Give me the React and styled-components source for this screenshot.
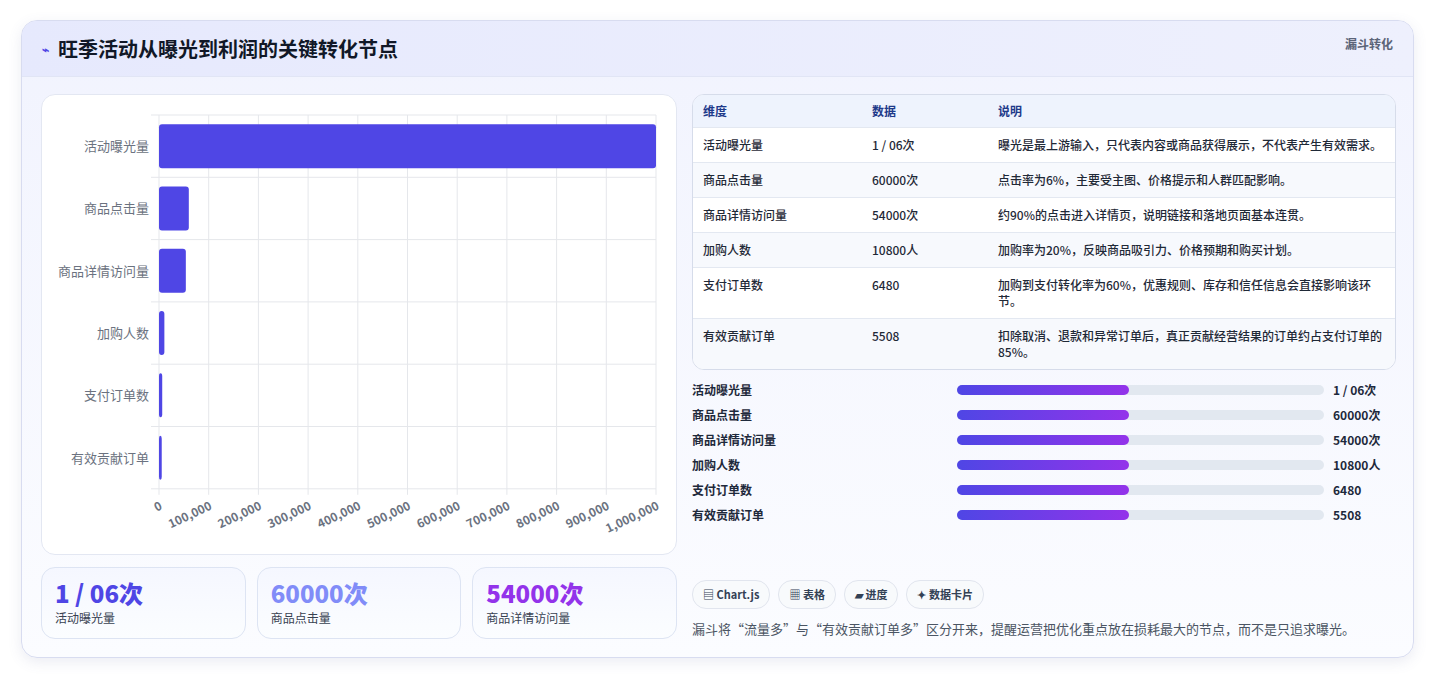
import React from "react";
import styled, { createGlobalStyle } from "styled-components";

const GlobalStyle = createGlobalStyle`
  body {
    margin: 0;
    background: #f3f4f8;
    font-family: "Noto Sans CJK SC", "Noto Sans", sans-serif;
    color: #1e293b;
  }
`;

const Page = styled.div`
  padding: 20px 21px 21px 21px;
  height: 679px;
  box-sizing: border-box;
  background: #ffffff;
`;

const Card = styled.div`
  border: 1px solid #d8dcf0;
  border-radius: 16px;
  background: linear-gradient(180deg, #f1f3fe 0%, #fbfcff 100%);
  box-shadow: 0 4px 14px rgba(90, 100, 160, 0.12);
  overflow: hidden;
  height: 638px;
  box-sizing: border-box;
`;

const Header = styled.div`
  height: 55px;
  display: flex;
  align-items: center;
  justify-content: space-between;
  padding: 0 20px 0 20px;
  background: linear-gradient(90deg, #e6e9fd, #eef0fd);
  border-bottom: 1px solid #e1e5f5;
`;

const Title = styled.h1`
  margin: 0;
  font-size: 20px;
  font-weight: 700;
  color: #111827;
  display: flex;
  align-items: center;
  gap: 9px;
`;

const Tag = styled.span`
  font-size: 12px;
  font-weight: 700;
  color: #5b6478;
  align-self: flex-start;
  margin-top: 14px;
`;

const Body = styled.div`
  display: grid;
  grid-template-columns: 636px 704px;
  gap: 15px;
  padding: 17px 19px 0 19px;
`;

const Col = styled.div`
  display: flex;
  flex-direction: column;
`;

const ChartPanel = styled.div`
  height: 461px;
  background: #fff;
  border: 1px solid #e3e7f2;
  border-radius: 14px;
  box-sizing: border-box;
`;

const Kpis = styled.div`
  display: grid;
  grid-template-columns: repeat(3, 1fr);
  gap: 11px;
  margin-top: 12px;
`;

const Kpi = styled.div`
  height: 72px;
  border: 1px solid #dde4f3;
  border-radius: 14px;
  background: linear-gradient(180deg, #f5f7ff, #fbfdff);
  padding: 9px 13px;
  box-sizing: border-box;
`;

const KpiValue = styled.div`
  font-size: 24px;
  font-weight: 800;
  line-height: 32px;
  color: ${(p) => p.color};
`;

const KpiLabel = styled.div`
  font-size: 12px;
  line-height: 18px;
  color: #374151;
`;

const TableWrap = styled.div`
  border: 1px solid #d6dcea;
  border-radius: 12px;
  overflow: hidden;
  background: #fff;
`;

const Table = styled.table`
  width: 100%;
  border-collapse: collapse;
  font-size: 12px;
  table-layout: fixed;
  td, th {
    padding: 9px 10px;
    text-align: left;
    vertical-align: top;
    line-height: 16px;
    border-bottom: 1px solid #e3e8f1;
  }
  th {
    background: #eef3fd;
    color: #1e3a8a;
    font-weight: 700;
    padding: 8px 10px;
  }
  td { color: #1f2937; font-weight: 500; }
  tbody tr:nth-child(even) td { background: #f7f9fd; }
  tbody tr:last-child td { border-bottom: none; }
`;

const Progress = styled.div`
  margin-top: 10px;
  display: flex;
  flex-direction: column;
  gap: 6px;
`;

const PRow = styled.div`
  display: grid;
  grid-template-columns: 256px 367px 1fr;
  gap: 9px;
  align-items: center;
  font-size: 12px;
  font-weight: 600;
  height: 19px;
  white-space: nowrap;
`;

const Track = styled.div`
  height: 10px;
  border-radius: 5px;
  background: #e2e8f0;
`;

const Fill = styled.div`
  height: 100%;
  border-radius: 5px;
  background: linear-gradient(90deg, #4f46e5, #9333ea);
`;

const Chips = styled.div`
  display: flex;
  gap: 8px;
  margin-top: 56px;
`;

const Chip = styled.span`
  font-size: 11px;
  line-height: 15px;
  font-weight: 700;
  color: #334155;
  padding: 6px 10px;
  border: 1px solid #e1e5ee;
  border-radius: 14px;
  background: #f8fafc;
`;

const Note = styled.p`
  margin: 11px 0 0;
  font-size: 13px;
  line-height: 18px;
  color: #4b5563;
`;

const rows = [
  ["活动曝光量", "1 / 06次", "曝光是最上游输入，只代表内容或商品获得展示，不代表产生有效需求。", 1000000],
  ["商品点击量", "60000次", "点击率为6%，主要受主图、价格提示和人群匹配影响。", 60000],
  ["商品详情访问量", "54000次", "约90%的点击进入详情页，说明链接和落地页面基本连贯。", 54000],
  ["加购人数", "10800人", "加购率为20%，反映商品吸引力、价格预期和购买计划。", 10800],
  ["支付订单数", "6480", "加购到支付转化率为60%，优惠规则、库存和信任信息会直接影响该环节。", 6480],
  ["有效贡献订单", "5508", "扣除取消、退款和异常订单后，真正贡献经营结果的订单约占支付订单的85%。", 5508],
];

function Chart() {
  const x0 = 117, x1 = 614, y0 = 20, rowH = 62.3;
  const sx = (v) => x0 + ((x1 - x0) * v) / 1000000;
  const ticks = Array.from({ length: 11 }, (_, i) => i * 100000);
  return (
    <svg width="636" height="461" style={{ display: "block" }}>
      {ticks.map((t) => (
        <line key={t} x1={sx(t)} x2={sx(t)} y1={y0} y2={y0 + rowH * 6 + 6} stroke="#e5e7eb" />
      ))}
      {Array.from({ length: 7 }, (_, i) => (
        <line key={i} x1={x0 - 8} x2={x1} y1={y0 + rowH * i} y2={y0 + rowH * i} stroke="#e5e7eb" />
      ))}
      {rows.map((r, i) => {
        const cy = y0 + rowH * i + rowH / 2;
        return (
          <g key={r[0]}>
            <text x={x0 - 10} y={cy + 5} textAnchor="end" fontSize="13" fill="#6b7280">{r[0]}</text>
            <rect x={x0} y={cy - 22} width={Math.max(sx(r[3]) - x0, 2)} height={44} rx="3" fill="#4f46e5" />
          </g>
        );
      })}
      {ticks.map((t) => (
        <text key={t} x={sx(t) + 4} y={y0 + rowH * 6 + 20} fontSize="12" fontWeight="700" fill="#6b7280" textAnchor="end"
          transform={`rotate(-25 ${sx(t) + 4} ${y0 + rowH * 6 + 20})`}>
          {t.toLocaleString("en-US")}
        </text>
      ))}
    </svg>
  );
}

export default function App() {
  return (
    <Page>
      <GlobalStyle />
      <Card>
        <Header>
          <Title><span style={{ color: "#4f46e5", fontSize: 12 }}>⌁</span>旺季活动从曝光到利润的关键转化节点</Title>
          <Tag>漏斗转化</Tag>
        </Header>
        <Body>
          <Col>
            <ChartPanel><Chart /></ChartPanel>
            <Kpis>
              <Kpi><KpiValue color="#4f46e5">1 / 06次</KpiValue><KpiLabel>活动曝光量</KpiLabel></Kpi>
              <Kpi><KpiValue color="#818cf8">60000次</KpiValue><KpiLabel>商品点击量</KpiLabel></Kpi>
              <Kpi><KpiValue color="#9333ea">54000次</KpiValue><KpiLabel>商品详情访问量</KpiLabel></Kpi>
            </Kpis>
          </Col>
          <Col>
            <TableWrap>
              <Table>
                <colgroup><col style={{ width: 169 }} /><col style={{ width: 126 }} /><col /></colgroup>
                <thead><tr><th>维度</th><th>数据</th><th>说明</th></tr></thead>
                <tbody>
                  {rows.map((r) => (
                    <tr key={r[0]}><td>{r[0]}</td><td>{r[1]}</td><td>{r[2]}</td></tr>
                  ))}
                </tbody>
              </Table>
            </TableWrap>
            <Progress>
              {rows.map((r) => (
                <PRow key={r[0]}>
                  <span>{r[0]}</span>
                  <Track><Fill style={{ width: "47%" }} /></Track>
                  <span>{r[1]}</span>
                </PRow>
              ))}
            </Progress>
            <Chips>
              <Chip>▤ Chart.js</Chip>
              <Chip>▦ 表格</Chip>
              <Chip>▰ 进度</Chip>
              <Chip>✦ 数据卡片</Chip>
            </Chips>
            <Note>漏斗将“流量多”与“有效贡献订单多”区分开来，提醒运营把优化重点放在损耗最大的节点，而不是只追求曝光。</Note>
          </Col>
        </Body>
      </Card>
    </Page>
  );
}
